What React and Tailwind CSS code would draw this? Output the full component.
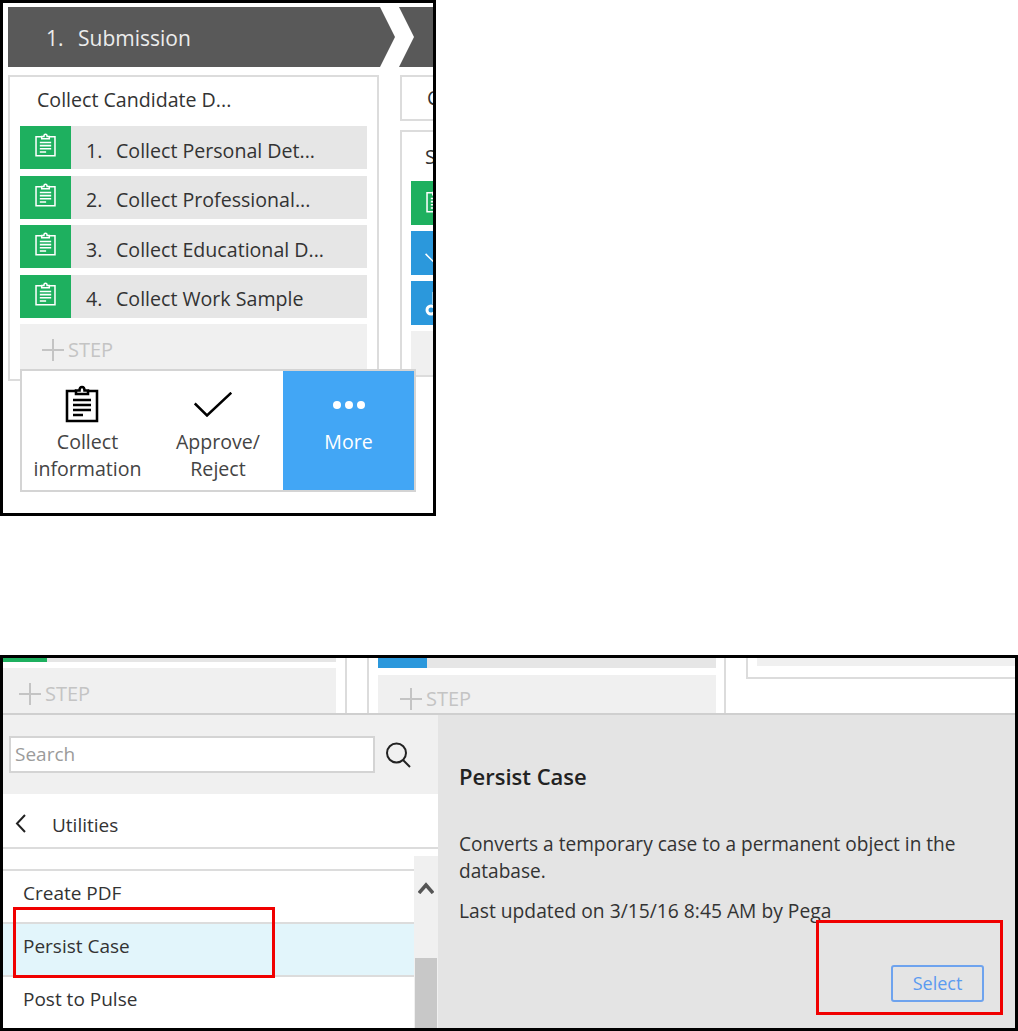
function ClipboardIcon({ className, sw = 1.6 }) {
  return (
    <svg viewBox="0 0 36 38" fill="none" stroke="currentColor" strokeWidth={sw * 1.5} className={className}>
      <path d="M12 6H3v30h30V6h-9" />
      <path d="M12 9V5.500h3.500C15.500 3 16.500 2 18 2s2.500 1 2.500 3.500H24V9z" />
      <path d="M9 15h18M9 20h18M9 25h18M9 30h10" />
    </svg>
  );
}

function CheckIcon({ className }) {
  return (
    <svg viewBox="0 0 38 25" fill="none" stroke="currentColor" strokeWidth="2.500" className={className}>
      <path d="M0.800 11.500L13 23.500L37.300 0.700" />
    </svg>
  );
}

function PlusStep({ className = "" }) {
  return (
    <div className={"flex items-center text-[#c4c4c4] text-[20px] " + className}>
      <svg viewBox="0 0 22 22" stroke="currentColor" strokeWidth="2" className="w-[22px] h-[22px]">
        <path d="M11 0V22M0 11H22" />
      </svg>
      <span className="ml-[4px]">STEP</span>
    </div>
  );
}

function StepRow({ num, label }) {
  return (
    <div className="flex h-[43px] bg-[#e6e6e6]">
      <div className="w-[51px] bg-[#1eb05f] flex items-start justify-center pt-[7px] text-white">
        <ClipboardIcon className="w-[23px] h-[24px]" />
      </div>
      <div className="flex items-center pl-[15px] pt-[6px] text-[19.600px] text-[#333]">
        <span className="w-[30px]">{num}.</span>
        <span>{label}</span>
      </div>
    </div>
  );
}

function SideRow({ color, children }) {
  return (
    <div className={"h-[44px] w-[30px] overflow-hidden text-white " + color}>
      {children}
    </div>
  );
}

function TopCard() {
  const steps = [
    "Collect Personal Det...",
    "Collect Professional...",
    "Collect Educational D...",
    "Collect Work Sample",
  ];
  return (
    <div className="relative w-[436px] h-[516px] border-[3px] border-black overflow-hidden bg-white">
      <div className="flex mt-[4px] ml-[5px] h-[60px]">
        <div className="w-[387px] shrink-0 bg-[#595959] [clip-path:polygon(0_0,372px_0,100%_50%,372px_100%,0_100%)] flex items-center pl-[38px] pt-[3px] text-[21px] text-[#ececec]">
          <span className="w-[32px]">1.</span>
          <span>Submission</span>
        </div>
        <div className="ml-[4px] flex-1 bg-[#595959] [clip-path:polygon(0_0,100%_0,100%_100%,0_100%,15px_50%)]"></div>
      </div>

      <div className="flex mt-[8px] ml-[5px]">
        <div className="w-[371px] h-[306px] shrink-0 border-2 border-[#dcdcdc] px-[10px]">
          <div className="h-[45px] mb-[4px] flex items-center pl-[17px] text-[19.600px] text-[#333] whitespace-nowrap">
            Collect Candidate D...
          </div>
          <div className="flex flex-col gap-[6.500px]">
            {steps.map((s, i) => (
              <StepRow key={s} num={i + 1} label={s} />
            ))}
            <div className="h-[46px] bg-[#f0f0f0] flex items-center pl-[22px] pt-[6px]">
              <PlusStep />
            </div>
          </div>
        </div>

        <div className="ml-[21px] flex-1 min-w-0 flex flex-col gap-[9px]">
          <div className="h-[46px] border-2 border-r-0 border-[#dcdcdc] flex items-center pl-[25px] text-[19.600px] text-[#333] whitespace-nowrap overflow-hidden">
            Collect
          </div>
          <div className="h-[247px] border-2 border-r-0 border-[#dcdcdc] pl-[9px] overflow-hidden">
            <div className="h-[49px] flex items-center pl-[14px] text-[19.600px] text-[#333]">Set</div>
            <div className="flex flex-col gap-[6px]">
              <SideRow color="bg-[#1eb05f]">
                <ClipboardIcon className="w-[23px] h-[24px] ml-[14px] mt-[8px]" />
              </SideRow>
              <SideRow color="bg-[#2b98dc]">
                <CheckIcon className="w-[23px] h-[15px] ml-[14px] mt-[16px]" />
              </SideRow>
              <SideRow color="bg-[#2b98dc]">
                <svg viewBox="0 0 12 30" fill="none" stroke="currentColor" strokeWidth="3" className="w-[12px] h-[30px] ml-[14px] mt-[9px]">
                  <path d="M9 2V14" />
                  <circle cx="6" cy="20" r="4" />
                </svg>
              </SideRow>
              <div className="h-[44px] bg-[#f0f0f0]"></div>
            </div>
          </div>
        </div>
      </div>

      <div className="absolute left-[17px] top-[366px] w-[396px] h-[123px] border-2 border-[#d4d4d4] bg-white flex text-[19.600px] leading-[27px] text-[#444] text-center">
        <div className="w-[131px] pt-[14px]">
          <ClipboardIcon className="w-[36px] h-[38px] text-black ml-[42px]" sw={1.7} />
          <div className="mt-[5px] w-full">Collect<br />information</div>
        </div>
        <div className="w-[130px] pt-[21px]">
          <CheckIcon className="w-[38px] h-[25px] text-black ml-[41px]" />
          <div className="mt-[11px]">Approve/<br />Reject</div>
        </div>
        <div className="flex-1 bg-[#42a6f5] text-white flex flex-col items-center pt-[30px]">
          <div className="flex gap-[4px]">
            <span className="w-[8px] h-[8px] rounded-full bg-white"></span>
            <span className="w-[8px] h-[8px] rounded-full bg-white"></span>
            <span className="w-[8px] h-[8px] rounded-full bg-white"></span>
          </div>
          <div className="mt-[19px]">More</div>
        </div>
      </div>
    </div>
  );
}

function ListItem({ label, active }) {
  return (
    <div className={"h-[53px] border-t-2 border-[#dcdcdc] flex items-center pl-[20px] pb-[6px] text-[19px] text-[#333] " + (active ? "bg-[#e2f5fb]" : "")}>
      {label}
    </div>
  );
}

function BottomCard() {
  return (
    <div className="relative h-[376px] border-[3px] border-black overflow-hidden bg-white">
      <div className="h-[55px] flex">
        <div className="w-[333px]">
          <div className="flex h-[4px]">
            <div className="w-[44px] bg-[#1eb05f]"></div>
            <div className="flex-1 bg-[#e6e6e6]"></div>
          </div>
          <div className="mt-[6px] h-[45px] bg-[#f0f0f0] flex items-center pl-[16px] pt-[6px]">
            <PlusStep />
          </div>
        </div>
        <div className="ml-[9px] w-[24px] border-x-2 border-[#dcdcdc]"></div>
        <div className="ml-[9px] w-[338px]">
          <div className="flex h-[10px]">
            <div className="w-[49px] bg-[#2b98dc]"></div>
            <div className="flex-1 bg-[#e6e6e6]"></div>
          </div>
          <div className="mt-[7px] h-[38px] bg-[#f0f0f0] flex items-center pl-[22px] pt-[10px]">
            <PlusStep />
          </div>
        </div>
        <div className="ml-[8px] w-[2px] bg-[#dcdcdc]"></div>
        <div className="ml-[20px] flex-1 h-[21px] border-2 border-r-0 border-t-0 border-[#dcdcdc] pl-[9px]">
          <div className="h-[8px] bg-[#f0f0f0]"></div>
        </div>
      </div>

      <div className="flex h-[315px] border-t-2 border-[#cfcfcf]">
        <div className="w-[435px] shrink-0 bg-white">
          <div className="h-[79px] bg-[#f0f0f0] flex items-center pl-[6px]">
            <div className="w-[366px] h-[37px] border-2 border-[#d4d4d4] bg-white flex items-center pl-[4px] text-[19px] text-[#9b9b9b]">
              Search
            </div>
            <svg viewBox="0 0 26 26" fill="none" stroke="#222" strokeWidth="2" className="ml-[10px] w-[26px] h-[26px]">
              <circle cx="11.500" cy="11" r="9.500" />
              <path d="M18 18L25 25" />
            </svg>
          </div>
          <div className="h-[55px] border-b-2 border-[#dcdcdc] flex items-center pl-[12px] pt-[6px] text-[19px] text-[#333]">
            <svg viewBox="0 0 11 19" fill="none" stroke="#222" strokeWidth="2" className="w-[11px] h-[19px]">
              <path d="M10 1L2 9.500L10 18" />
            </svg>
            <span className="ml-[26px] pt-[3px]">Utilities</span>
          </div>
          <div className="mt-[7px] flex">
            <div className="w-[411px] pt-[13px]">
              <ListItem label="Create PDF" />
              <ListItem label="Persist Case" active />
              <ListItem label="Post to Pulse" />
            </div>
            <div className="w-[24px] h-[173px] bg-[#f0f0f0] flex flex-col">
              <svg viewBox="0 0 16 12" fill="none" stroke="#555" strokeWidth="3.500" className="w-[16px] h-[12px] ml-[4px] mt-[26px]">
                <path d="M1 11L8 3L15 11" />
              </svg>
              <div className="mt-auto ml-[1px] w-[22px] h-[71px] bg-[#c8c8c8]"></div>
            </div>
          </div>
        </div>
        <div className="flex-1 bg-[#e4e4e4] pl-[21px] pr-[30px] relative">
          <div className="mt-[46px] text-[22px] leading-[30px] font-semibold text-[#222]">Persist Case</div>
          <div className="mt-[40px] text-[19.080px] leading-[27px] text-[#333]">
            Converts a temporary case to a permanent object in the database.
          </div>
          <div className="mt-[12px] text-[19.250px] leading-[27px] text-[#333]">
            Last updated on 3/15/16 8:45 AM by Pega
          </div>
          <div className="flex justify-end mt-[41px] mr-[1px]">
            <button className="w-[93px] h-[37px] border-2 border-[#6ea3ee] rounded-[3px] text-[18px] text-[#5b9bf0]">
              Select
            </button>
          </div>
        </div>
      </div>

      <div className="absolute left-[10px] top-[249px] w-[262px] h-[71px] border-[3px] border-[#f00000]"></div>
      <div className="absolute left-[813px] top-[262px] w-[187px] h-[95px] border-[3px] border-[#f00000]"></div>
    </div>
  );
}

export default function App() {
  return (
    <div className="w-[1018px] h-[1031px] bg-white font-['Open_Sans',sans-serif]">
      <TopCard />
      <div className="mt-[139px]">
        <BottomCard />
      </div>
    </div>
  );
}
